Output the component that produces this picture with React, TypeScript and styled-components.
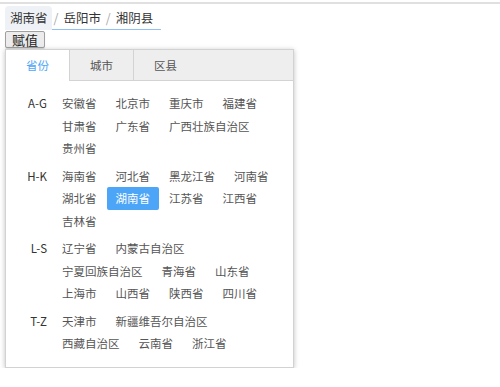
import styled, { createGlobalStyle } from 'styled-components'

const GlobalStyle = createGlobalStyle`
  html, body {
    margin: 0;
    padding: 0;
    background: #fff;
    font-family: "Noto Sans CJK SC", "Noto Sans", sans-serif;
  }
`

const Page = styled.div`
  padding: 2px 0 0 5px;
`

const TopRule = styled.div`
  height: 2px;
  margin-top: 2px;
  background: #e0e0e0;
`

const Picker = styled.div`
  display: flex;
  align-items: flex-end;
  margin-top: 0;
  height: 24px;
  font-size: 12.5px;
  color: #333;
`

const Segment = styled.span`
  padding: 0 4px 0 5px;
  line-height: 24px;
  background: #eef1f6;
  border-radius: 4px 4px 0 0;
`

const Trail = styled.span`
  display: flex;
  line-height: 23px;
  padding-right: 8px;
  border-bottom: 1px solid #8fc1f2;
`

const Sep = styled.span`
  color: #aaa;
  margin: 0 5px 0 2px;
`

const AssignButton = styled.button`
  display: block;
  margin-top: 1px;
  height: 17px;
  padding: 0 6px;
  font-family: inherit;
  font-size: 13px;
  line-height: 15px;
  color: #222;
  background: #ececec;
  border: 1px solid #a0a0a0;
  border-radius: 2px;
  box-shadow: 0 1px 1px rgba(0, 0, 0, 0.15);
`

const Panel = styled.div`
  width: 287px;
  margin-top: 1px;
  background: #fff;
  border: 1px solid #d2d2d2;
  box-shadow: 0 1px 5px rgba(0, 0, 0, 0.25);
`

const TabBar = styled.div`
  display: flex;
  height: 30px;
  background: #eee;
  border-bottom: 1px solid #d3d3d3;
`

const Tab = styled.div<{ $active?: boolean }>`
  height: ${(p) => (p.$active ? '31px' : '30px')};
  padding: 0 20px;
  line-height: 30px;
  font-size: 11.5px;
  color: ${(p) => (p.$active ? '#4fa6f7' : '#555')};
  background: ${(p) => (p.$active ? '#fff' : 'transparent')};

  & + & {
    border-left: 1px solid #d3d3d3;
  }
`

const Body = styled.div`
  padding: 11px 8px 12px 10px;
`

const Group = styled.div`
  display: flex;
  align-items: flex-start;

  & + & {
    margin-top: 5px;
  }
`

const Letter = styled.div`
  width: 31px;
  flex-shrink: 0;
  margin-right: 6px;
  text-align: right;
  font-size: 11.5px;
  line-height: 22.5px;
  color: #333;
`

const Items = styled.div`
  display: flex;
  flex-wrap: wrap;
  flex: 1;
`

const Item = styled.span<{ $selected?: boolean }>`
  padding: 0 9px;
  margin-right: 1px;
  font-size: 11.5px;
  line-height: 22.5px;
  white-space: nowrap;
  border-radius: 2px;
  color: ${(p) => (p.$selected ? '#fff' : '#555')};
  background: ${(p) => (p.$selected ? '#4ca5f7' : 'transparent')};
`

const groups: { letter: string; names: string[] }[] = [
  { letter: 'A-G', names: ['安徽省', '北京市', '重庆市', '福建省', '甘肃省', '广东省', '广西壮族自治区', '贵州省'] },
  { letter: 'H-K', names: ['海南省', '河北省', '黑龙江省', '河南省', '湖北省', '湖南省', '江苏省', '江西省', '吉林省'] },
  { letter: 'L-S', names: ['辽宁省', '内蒙古自治区', '宁夏回族自治区', '青海省', '山东省', '上海市', '山西省', '陕西省', '四川省'] },
  { letter: 'T-Z', names: ['天津市', '新疆维吾尔自治区', '西藏自治区', '云南省', '浙江省'] },
]

const App = () => (
  <>
    <GlobalStyle />
    <TopRule />
    <Page>
      <Picker>
        <Segment>湖南省</Segment>
        <Trail>
          <Sep>/</Sep>岳阳市<Sep>&nbsp;/</Sep>湘阴县
        </Trail>
      </Picker>
      <AssignButton>赋值</AssignButton>
      <Panel>
        <TabBar>
          <Tab $active>省份</Tab>
          <Tab>城市</Tab>
          <Tab>区县</Tab>
        </TabBar>
        <Body>
          {groups.map((g) => (
            <Group key={g.letter}>
              <Letter>{g.letter}</Letter>
              <Items>
                {g.names.map((n) => (
                  <Item key={n} $selected={n === '湖南省'}>
                    {n}
                  </Item>
                ))}
              </Items>
            </Group>
          ))}
        </Body>
      </Panel>
    </Page>
  </>
)

export default App
